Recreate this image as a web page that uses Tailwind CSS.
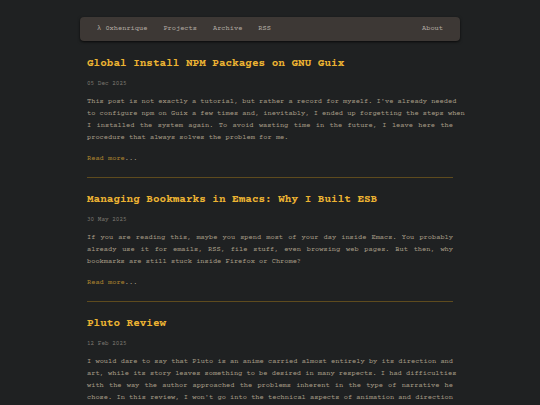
<!DOCTYPE html>
<html lang="en">
<head>
<meta charset="utf-8">
<meta name="viewport" content="width=device-width, initial-scale=1">
<title>0xhenrique</title>
<script src="https://cdn.jsdelivr.net/npm/@tailwindcss/browser@4"></script>
</head>
<body class="min-h-screen overflow-x-hidden bg-[#1f2122] font-['Courier_Prime','Liberation_Mono',monospace] text-[7px] leading-3 text-[#a79d87]">
<div class="mx-auto max-w-[380px] pt-[17px]">
  <nav class="flex h-6 items-center gap-4 rounded bg-[#3d3835] px-[17px] text-[#b3aca4] shadow-sm shadow-black/60">
    <a href="#">λ 0xhenrique</a>
    <a href="#">Projects</a>
    <a href="#">Archive</a>
    <a href="#">RSS</a>
    <a href="#" class="ml-auto">About</a>
  </nav>
  <main class="px-[7px] pt-[15px]">
    <article>
      <h2 class="text-[11px] leading-4 font-bold text-[#ecb332]"><a href="#">Global Install NPM Packages on GNU Guix</a></h2>
      <time class="mt-[6px] block text-[6px] leading-3 text-[#7a766e]">05 Dec 2025</time>
      <p class="mt-[6px] text-justify"><span class="whitespace-nowrap">This post is not exactly a tutorial, but rather a record for myself. I've already needed</span> <span class="whitespace-nowrap">to configure npm on Guix a few times and, inevitably, I ended up forgetting the steps when</span> I installed the system again. To avoid wasting time in the future, I leave here the procedure that always solves the problem for me.</p>
      <p class="mt-[9px]"><a href="#" class="text-[#b0862e]">Read more</a>...</p>
    </article>
    <hr class="mt-3 mb-[14px] h-px border-0 bg-[#5e4b1e]">
    <article>
      <h2 class="text-[11px] leading-4 font-bold text-[#ecb332]"><a href="#">Managing Bookmarks in Emacs: Why I Built ESB</a></h2>
      <time class="mt-[6px] block text-[6px] leading-3 text-[#7a766e]">30 May 2025</time>
      <p class="mt-[6px] text-justify">If you are reading this, maybe you spend most of your day inside Emacs. You probably already use it for emails, RSS, file stuff, even browsing web pages. But then, why bookmarks are still stuck inside Firefox or Chrome?</p>
      <p class="mt-[9px]"><a href="#" class="text-[#b0862e]">Read more</a>...</p>
    </article>
    <hr class="mt-3 mb-[14px] h-px border-0 bg-[#5e4b1e]">
    <article>
      <h2 class="text-[11px] leading-4 font-bold text-[#ecb332]"><a href="#">Pluto Review</a></h2>
      <time class="mt-[6px] block text-[6px] leading-3 text-[#7a766e]">12 Feb 2025</time>
      <p class="mt-[6px] text-justify [text-align-last:justify]">I would dare to say that Pluto is an anime carried almost entirely by its direction and <span class="whitespace-nowrap">art, while its story leaves something to be desired in many respects. I had difficulties</span> with the way the author approached the problems inherent in the type of narrative he chose. In this review, I won't go into the technical aspects of animation and direction</p>
    </article>
  </main>
</div>
</body>
</html>
